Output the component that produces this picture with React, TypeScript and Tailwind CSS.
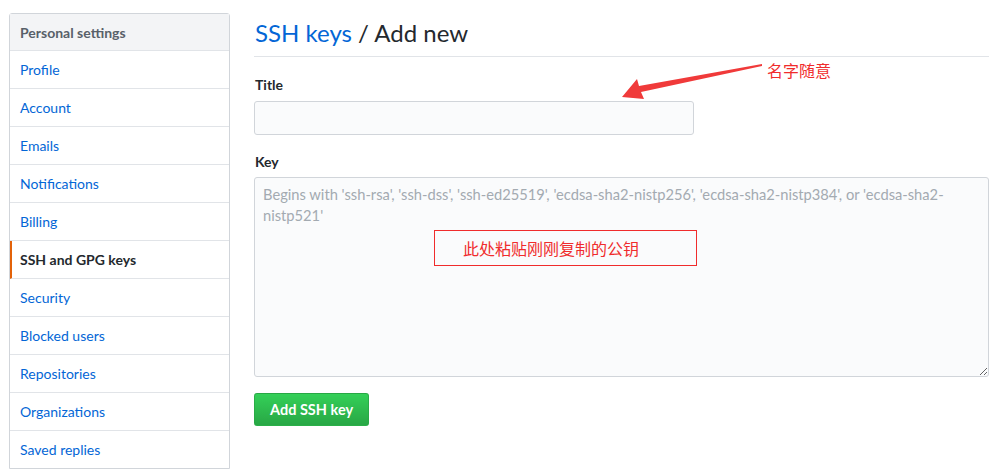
import { useState } from 'react'

const font = "font-['Lato','Liberation_Sans',sans-serif]"

const menu = [
  'Profile',
  'Account',
  'Emails',
  'Notifications',
  'Billing',
  'SSH and GPG keys',
  'Security',
  'Blocked users',
  'Repositories',
  'Organizations',
  'Saved replies',
]

function Sidebar() {
  return (
    <nav className="w-[221px] shrink-0 border border-[#d1d5da] rounded-t-[3px] bg-white">
      <div className="h-[37px] flex items-center px-[10px] bg-[#f3f4f6] border-b border-[#e1e4e8] text-[14px] font-bold text-[#586069]">
        Personal settings
      </div>
      {menu.map((item, i) => {
        const active = item === 'SSH and GPG keys'
        return (
          <div
            key={item}
            className={
              active
                ? 'h-[38px] flex items-center pl-[8px] border-l-[2px] border-l-[#e36209] border-b border-b-[#e1e4e8] text-[14px] font-bold text-[#24292e]'
                : i === menu.length - 1
                  ? 'h-[37px] flex items-center px-[10px] text-[14px] text-[#0366d6]'
                  : 'h-[38px] flex items-center px-[10px] border-b border-[#e1e4e8] text-[14px] text-[#0366d6]'
            }
          >
            {item}
          </div>
        )
      })}
    </nav>
  )
}

export default function App() {
  const [title, setTitle] = useState('')
  const [key, setKey] = useState('')

  return (
    <div className={`relative w-[1004px] h-[469px] overflow-hidden bg-white ${font}`}>
      <div className="flex gap-[24px] pl-[9px] pt-[13px] pr-[15px]">
        <Sidebar />

        {/* Form */}
        <div className="flex-1">
          <h2 className="h-[44px] pt-[4px] pl-[1px] border-b border-[#e1e4e8] text-[24px] leading-[32px] text-[#24292e]">
            <span className="text-[#0366d6]">SSH keys</span> / Add new
          </h2>

          <label className="block mt-[17px] pl-[1px] text-[14px] font-bold text-[#24292e]">Title</label>
          <input
            value={title}
            onChange={e => setTitle(e.target.value)}
            className="block mt-[6px] w-[440px] h-[34px] px-[8px] bg-[#fafbfc] border border-[#d1d5da] rounded-[3px] text-[14px] outline-none"
          />

          <label className="block mt-[16px] pl-[1px] text-[14px] font-bold text-[#24292e]">Key</label>
          <textarea
            value={key}
            onChange={e => setKey(e.target.value)}
            placeholder="Begins with 'ssh-rsa', 'ssh-dss', 'ssh-ed25519', 'ecdsa-sha2-nistp256', 'ecdsa-sha2-nistp384', or 'ecdsa-sha2-nistp521'"
            className="block mt-[5px] w-full h-[200px] px-[8px] py-[6px] bg-[#fafbfc] border border-[#d1d5da] rounded-[3px] text-[14.7px] leading-[21px] text-[#24292e] placeholder:text-[#a3aab1] outline-none resize-y"
          />

          <button className="mt-[16px] h-[33px] px-[15px] rounded-[3px] border border-[#28a745]/80 bg-gradient-to-b from-[#34d058] to-[#28a745] text-white text-[14.5px] font-bold">
            Add SSH key
          </button>
        </div>
      </div>

      {/* Annotations */}
      <svg className="absolute left-0 top-0 pointer-events-none" width="1004" height="469">
        <polygon points="762,64 639,86 637,79 622,97 644,99 641,92 762,66" fill="#f03a3a" />
      </svg>
      <div className="absolute left-[767px] top-[58px] text-[16px] text-[#f02c2c] font-['Noto_Sans_CJK_SC',sans-serif]">
        名字随意
      </div>
      <div className="absolute left-[434px] top-[230px] w-[263px] h-[36px] border border-[#f02c2c] flex items-center pl-[28px] text-[16px] text-[#f02c2c] font-['Noto_Sans_CJK_SC',sans-serif]">
        此处粘贴刚刚复制的公钥
      </div>
    </div>
  )
}
